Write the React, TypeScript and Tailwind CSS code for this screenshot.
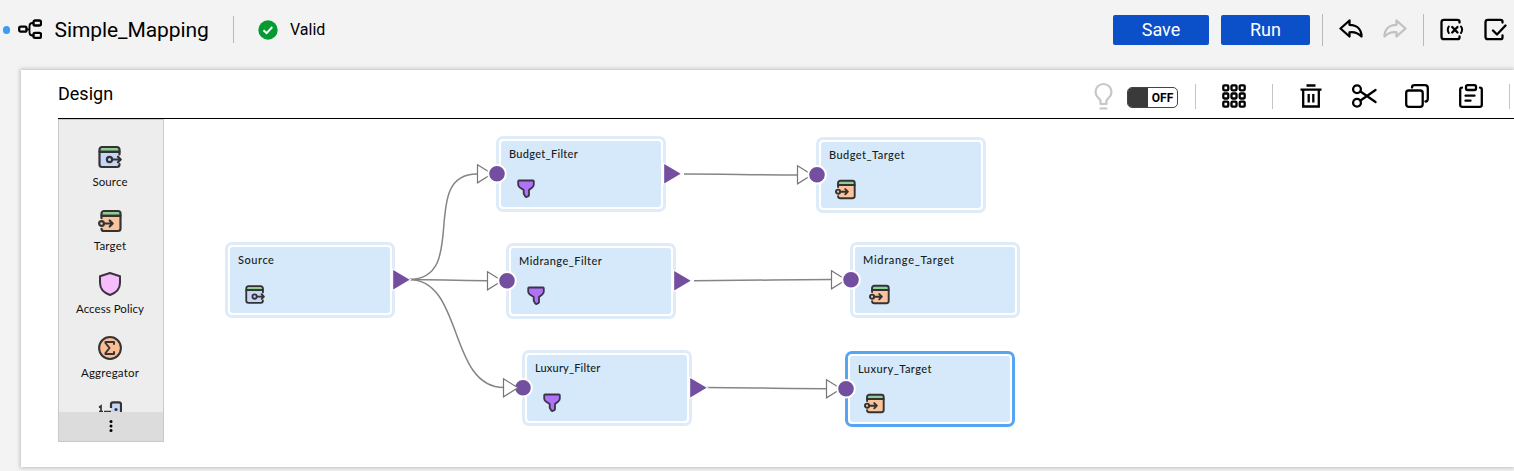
import React from "react";

type Kind = "source" | "target" | "filter";
type FlowNode = {
  name: string;
  kind: Kind;
  x: number;
  y: number;
  tracking: string;
  selected?: boolean;
  input?: boolean;
  output?: boolean;
};

const nodes: FlowNode[] = [
  { name: "Source", kind: "source", x: 61, y: 123, tracking: "tracking-[0.55px]", output: true },
  { name: "Budget_Filter", kind: "filter", x: 332, y: 17, tracking: "tracking-[0.3px]", input: true, output: true },
  { name: "Midrange_Filter", kind: "filter", x: 342, y: 124, tracking: "tracking-[0.45px]", input: true, output: true },
  { name: "Luxury_Filter", kind: "filter", x: 358, y: 231, tracking: "tracking-[0.17px]", input: true, output: true },
  { name: "Budget_Target", kind: "target", x: 652, y: 18, tracking: "tracking-[0.45px]", input: true },
  { name: "Midrange_Target", kind: "target", x: 686, y: 123, tracking: "tracking-[0.7px]", input: true },
  { name: "Luxury_Target", kind: "target", x: 681, y: 232, tracking: "tracking-[0.45px]", selected: true, input: true },
];

function SourceIcon({ className }: { className: string }) {
  return (
    <svg className={className} viewBox="0 0 24 24" fill="none" stroke="#333" strokeWidth="2.2" strokeLinecap="round" strokeLinejoin="round">
      <rect x="1.500" y="2" width="20" height="20" rx="2.5" fill="#c5d6f8" stroke="none" />
      <path d="M1.500 6.800V4.500A2.500 2.500 0 0 1 4 2H19A2.500 2.500 0 0 1 21.500 4.500V6.800Z" fill="#8fce97" />
      <path d="M21.500 9.500V6.800H1.500V19.500A2.500 2.500 0 0 0 4 22H19A2.500 2.500 0 0 0 21.500 19.500V19" />
      <circle cx="11.500" cy="14.500" r="2.600" />
      <path d="M14.200 14.500H22.500M20 11.700L22.700 14.500L20 17.300" />
    </svg>
  );
}

function TargetIcon({ className }: { className: string }) {
  return (
    <svg className={className} viewBox="0 0 24 24" fill="none" stroke="#333" strokeWidth="2.2" strokeLinecap="round" strokeLinejoin="round">
      <rect x="3.500" y="2" width="19" height="20" rx="2.500" fill="#fbc39c" stroke="none" />
      <path d="M3.500 6.800V4.500A2.500 2.500 0 0 1 6 2H20A2.500 2.500 0 0 1 22.500 4.500V6.800Z" fill="#8fce97" />
      <path d="M3.500 9.200V6.800H22.500V19.500A2.500 2.500 0 0 1 20 22H6A2.500 2.500 0 0 1 3.500 19.800" />
      <circle cx="3.500" cy="14.500" r="2.400" fill="#fbc39c" />
      <path d="M6.200 14.500H14.500M11.700 11.500L14.700 14.500L11.700 17.500" />
    </svg>
  );
}

function FilterIcon({ className }: { className: string }) {
  return (
    <svg className={className} viewBox="0 0 18 19" fill="#b072f6" stroke="#3b3347" strokeWidth="1.800" strokeLinejoin="round">
      <path d="M2 1.500H16Q16.800 1.500 16.800 2.300V5.500Q16.800 7 15.500 8.200L12 11V16Q12 16.800 11.300 17.100L9.500 18Q8.500 18.200 8 17.200L6.700 14.500V11L2.500 8.200Q1.200 7 1.200 5.500V2.300Q1.200 1.500 2 1.500Z" />
    </svg>
  );
}

function NodeIcon({ kind }: { kind: Kind }) {
  if (kind === "source") return <SourceIcon className="ml-[15px] h-[21px] w-5" />;
  if (kind === "target") return <TargetIcon className="ml-[14px] h-[21px] w-[21px]" />;
  return <FilterIcon className="ml-4 h-[19px] w-[18px]" />;
}

function NodeBox({ node }: { node: FlowNode }) {
  return (
    <div
      className={
        "absolute h-[76px] w-[170px] rounded-[7px] border-[3px] bg-white p-[2px] " +
        (node.selected ? "border-[#55a5f3]" : "border-[#deecfa]")
      }
      style={{ left: node.x, top: node.y }}
    >
      <div className="flex h-full flex-col rounded-[3px] bg-[#d6e9fa] text-[#181c20]">
        <span className={"ml-2 mt-[6px] h-[14px] whitespace-nowrap font-['Lato'] text-[11px] font-medium leading-[14px] " + node.tracking}>
          {node.name}
        </span>
        <div className="mt-[17px] flex h-5 items-center">
          <NodeIcon kind={node.kind} />
        </div>
      </div>
    </div>
  );
}

function Ports({ node }: { node: FlowNode }) {
  const cy = node.y + 37.8;
  const overlap = node.name === "Luxury_Filter";
  const arrow = (
    <path
      d={`M${node.x - 18.5} ${cy - 9}L${node.x - 4} ${cy}L${node.x - 18.5} ${cy + 9}Z`}
      fill="#fff"
      stroke="#777"
      strokeWidth="1.200"
    />
  );
  return (
    <g>
      {node.input && !overlap && arrow}
      {node.input && <circle cx={node.x + 1} cy={cy} r="8.800" fill="#734f9f" stroke="#fff" strokeWidth="2" />}
      {node.input && overlap && arrow}
      {node.output && (
        <path
          d={`M${node.x + 168.2} ${cy - 9.7}L${node.x + 184.7} ${cy}L${node.x + 168.2} ${cy + 9.7}Z`}
          fill="#734f9f"
          stroke="#fff"
          strokeWidth="2"
          paintOrder="stroke"
        />
      )}
    </g>
  );
}

function Canvas() {
  return (
    <div className="relative h-[347px] flex-1 overflow-hidden">
      <svg className="absolute left-0 top-0" width="1350" height="347" fill="none" stroke="#858585" strokeWidth="1.500">
        <path d="M245 160.500C306 160.500 254 55 313 55" />
        <path d="M245 160.500C275 160.500 285 161.500 324 161.700" />
        <path d="M245 160.500C300 160.500 284 268.500 340 268.500" />
        <path d="M520 55C560 55 590 56 634 56" />
        <path d="M530 161.700C580 161.500 620 160.800 668 160.500" />
        <path d="M542 268.500C580 268.500 620 269.700 663 269.700" />
      </svg>
      {nodes.map((n) => (
        <NodeBox key={n.name} node={n} />
      ))}
      <svg className="absolute left-0 top-0" width="1350" height="347">
        {nodes.map((n) => (
          <Ports key={n.name} node={n} />
        ))}
      </svg>
    </div>
  );
}

function PaletteItem({ label, tracking, children }: { label: string; tracking: string; children: React.ReactNode }) {
  return (
    <div className="flex h-[63.7px] shrink-0 flex-col items-center">
      {children}
      <span className={"mt-[5px] whitespace-nowrap font-['Lato'] text-[11.5px] leading-[15px] text-[#111] " + tracking}>{label}</span>
    </div>
  );
}

function Palette() {
  return (
    <div className="flex h-[323px] w-[106px] flex-col border border-[#c9c9c9] bg-[#ededed]">
      <div className="flex h-[292px] flex-col overflow-hidden pr-[2px] pt-[25px]">
        <PaletteItem label="Source" tracking="tracking-[0.1px]">
          <SourceIcon className="h-6 w-6 shrink-0" />
        </PaletteItem>
        <PaletteItem label="Target" tracking="tracking-[0.2px]">
          <TargetIcon className="h-6 w-6 shrink-0" />
        </PaletteItem>
        <PaletteItem label="Access Policy" tracking="tracking-[0.05px]">
          <svg className="h-6 w-6 shrink-0" viewBox="0 0 24 24" fill="#f5bdfb" stroke="#3b3340" strokeWidth="2" strokeLinejoin="round">
            <path d="M12 1L22 4.200V11C22 17 17.500 21 12 23C6.500 21 2 17 2 11V4.200Z" />
          </svg>
        </PaletteItem>
        <PaletteItem label="Aggregator" tracking="tracking-[0.2px]">
          <svg className="h-6 w-6 shrink-0" viewBox="0 0 24 24" fill="none" stroke="#333" strokeWidth="2" strokeLinecap="round" strokeLinejoin="round">
            <circle cx="12" cy="12" r="10.900" fill="#fbbd93" />
            <path d="M16 8V6H7.500V7L11.500 12L7.500 17V18H16V16" />
          </svg>
        </PaletteItem>
        <svg className="ml-[39px] mt-px h-6 w-6 shrink-0" viewBox="0 0 24 24" fill="none" stroke="#333" strokeWidth="2.200">
          <path d="M13 7V3.500Q13 1.300 15 1.300H21Q23 1.300 23 3.300V18H13" fill="#c5d6f8" />
          <path d="M1 6.500L3 5V11M1 10.500H5M6 10.500H13" strokeWidth="1.700" />
          <circle cx="18" cy="8.500" r="1.600" fill="#333" stroke="none" />
        </svg>
      </div>
      <div className="flex flex-1 items-center justify-center bg-[#dcdcdc] pb-px">
        <svg width="4" height="14" viewBox="0 0 4 14" fill="#000">
          <circle cx="2" cy="2.500" r="1.500" />
          <circle cx="2" cy="7" r="1.500" />
          <circle cx="2" cy="11.500" r="1.500" />
        </svg>
      </div>
    </div>
  );
}

const svgBase = {
  fill: "none",
  stroke: "#000",
  strokeWidth: 2.3,
  strokeLinecap: "round" as const,
  strokeLinejoin: "round" as const,
  viewBox: "0 0 24 24",
};

function Header() {
  const curve = "M10.500 2.500L1.500 10.500L10.500 18.500V14.300C16 13.500 19.500 15.500 22.500 18.500C22.500 11.500 18 7 10.500 6.800Z";
  return (
    <header className="flex h-[59px] items-center text-black">
      <span className="ml-[3px] h-2 w-[7px] shrink-0 rounded-full bg-[#3b9bf5]" />
      <svg {...svgBase} className="ml-2 h-6 w-6 shrink-0">
        <rect x="1.200" y="8.700" width="7.300" height="5" rx="1.500" />
        <rect x="15.500" y="2.500" width="7.500" height="5" rx="1.500" />
        <rect x="15.500" y="14.800" width="7.500" height="5" rx="1.500" />
        <path d="M8.500 11.300H11M15.500 5H14.500Q11.500 5 11.500 8V14.500Q11.500 17.500 14.500 17.500H15.500" strokeWidth="1.800" />
      </svg>
      <h1 className="ml-[12.5px] w-[153.5px] whitespace-nowrap text-[21px] leading-6 tracking-[-0.08px]">Simple_Mapping</h1>
      <span className="ml-[25px] h-[27px] w-px bg-[#b9b9b9]" />
      <svg className="ml-6 h-5 w-5" viewBox="0 0 20 20">
        <circle cx="10" cy="10" r="9.700" fill="#069b32" />
        <path d="M5.500 10.200L8.600 13.200L14.300 7" fill="none" stroke="#fff" strokeWidth="1.900" />
      </svg>
      <span className="ml-3 text-[16px] leading-5">Valid</span>
      <div className="ml-auto flex items-center pr-[7px]">
        <button className="h-[30px] w-24 rounded-[2px] bg-[#0b50c9] text-[18px] leading-[30px] text-white">Save</button>
        <button className="ml-3 h-[30px] w-[89px] rounded-[2px] bg-[#0b50c9] text-[18px] leading-[30px] text-white">Run</button>
        <span className="ml-3 h-8 w-px bg-[#b9b9b9]" />
        <svg {...svgBase} className="ml-4 h-6 w-6"><path d={curve} /></svg>
        <svg {...svgBase} stroke="#c1c1c1" className="ml-5 h-6 w-6 -scale-x-100"><path d={curve} /></svg>
        <span className="ml-4 h-8 w-px bg-[#b9b9b9]" />
        <svg {...svgBase} className="ml-4 h-6 w-6">
          <path d="M19.500 4.500V3.500Q19.500 1.800 17.500 1.800H4Q1.500 1.800 1.500 4.300V18.700Q1.500 21.200 4 21.200H17.500Q19.500 21.200 19.500 19.500V18.500" />
          <path d="M8.800 8.500Q6.800 11.500 8.800 15M21 8.500Q23.200 11.500 21 15" strokeWidth="2" />
          <path d="M12.200 9L17.500 14.500M17.500 9L12.200 14.500" strokeWidth="2.300" />
        </svg>
        <svg {...svgBase} className="ml-5 h-6 w-[23px]" viewBox="0 0 23 24">
          <path d="M18.500 4.500V3.500Q18.500 1.800 16.500 1.800H4Q1.500 1.800 1.500 4.300V18.700Q1.500 21.200 4 21.200H16.500Q18.500 21.200 18.500 19.500V17.500" />
          <path d="M9 12.500L13 16.500L21.500 7.500" />
        </svg>
      </div>
    </header>
  );
}

function Toolbar() {
  return (
    <div className="flex h-[49px] items-start border-b border-black">
      <h2 className="mt-[14px] text-[18px] leading-5">Design</h2>
      <div className="ml-auto mt-1 flex h-[44px] items-center pr-1">
        <svg className="h-7 w-[19px]" viewBox="0 0 19 28" fill="none" stroke="#c7c7c7" strokeWidth="2.200" strokeLinecap="round" strokeLinejoin="round">
          <path d="M6.500 22V18.500C5 16 1.500 14.500 1.500 10A8 8 0 0 1 17.500 10C17.500 14.500 14 16 12.500 18.500V22ZM6.500 26.500H12.500" />
        </svg>
        <div className="ml-[14px] mt-[3px] flex h-[21px] w-[51px] overflow-hidden rounded-[5px] border border-[#444] bg-white">
          <span className="w-5 bg-[#3a3a3a]" />
          <span className="flex-1 text-center text-[12px] font-bold leading-[20px]">OFF</span>
        </div>
        <span className="ml-[17px] h-[25px] w-px bg-[#c4c4c4]" />
        <svg {...svgBase} className="ml-[26px] h-6 w-6">
          {[1.3, 9.5, 17.7].map((y) => [1.3, 9.5, 17.7].map((x) => <rect key={`${x}-${y}`} x={x} y={y} width="5" height="5" rx="1" />))}
        </svg>
        <span className="ml-[26px] h-[25px] w-px bg-[#c4c4c4]" />
        <svg {...svgBase} className="ml-[26px] h-6 w-6" strokeLinecap="butt" strokeLinejoin="miter">
          <path d="M1.500 5.700H22.500M7.500 1.500H16.500M4.200 5.700V22.500H19.800V5.700M9.700 10V18.500M14.300 10V18.500" />
        </svg>
        <svg {...svgBase} className="ml-[28px] h-6 w-[26px]" viewBox="0 0 26 24">
          <circle cx="6" cy="5.300" r="3.900" />
          <circle cx="6" cy="18.700" r="3.900" />
          <path d="M9.500 7.500L24.500 18M9.500 16.500L24.500 6" />
        </svg>
        <svg {...svgBase} className="ml-[28px] h-6 w-6">
          <rect x="1.200" y="6.500" width="16.500" height="16.300" rx="2.500" />
          <path d="M7 3.500Q7 1.200 9.500 1.200H20Q22.800 1.200 22.800 4V14.500Q22.800 17.500 20.500 17.500" />
        </svg>
        <svg {...svgBase} className="ml-[30px] h-6 w-6">
          <path d="M3 3.700Q1.200 3.700 1.200 5.700V20.800Q1.200 22.800 3.200 22.800H20.800Q22.800 22.800 22.800 20.800V5.700Q22.800 3.700 21 3.700" />
          <rect x="7" y="1.200" width="10" height="4.800" rx="1.500" />
          <path d="M6.500 11.700H15.500M6.500 16.700H11.500" />
        </svg>
        <span className="ml-[26px] h-[25px] w-px bg-[#c4c4c4]" />
      </div>
    </div>
  );
}

export default function App() {
  return (
    <div className="h-[471px] w-[1514px] overflow-hidden bg-[#f3f3f3] font-['Roboto',sans-serif] text-black">
      <Header />
      <main className="ml-[21px] mt-[11px] h-[397px] bg-white pl-[37px] shadow-[0_0_4px_1px_rgba(0,0,0,0.22)]">
        <Toolbar />
        <div className="flex items-start">
          <Palette />
          <Canvas />
        </div>
      </main>
    </div>
  );
}
